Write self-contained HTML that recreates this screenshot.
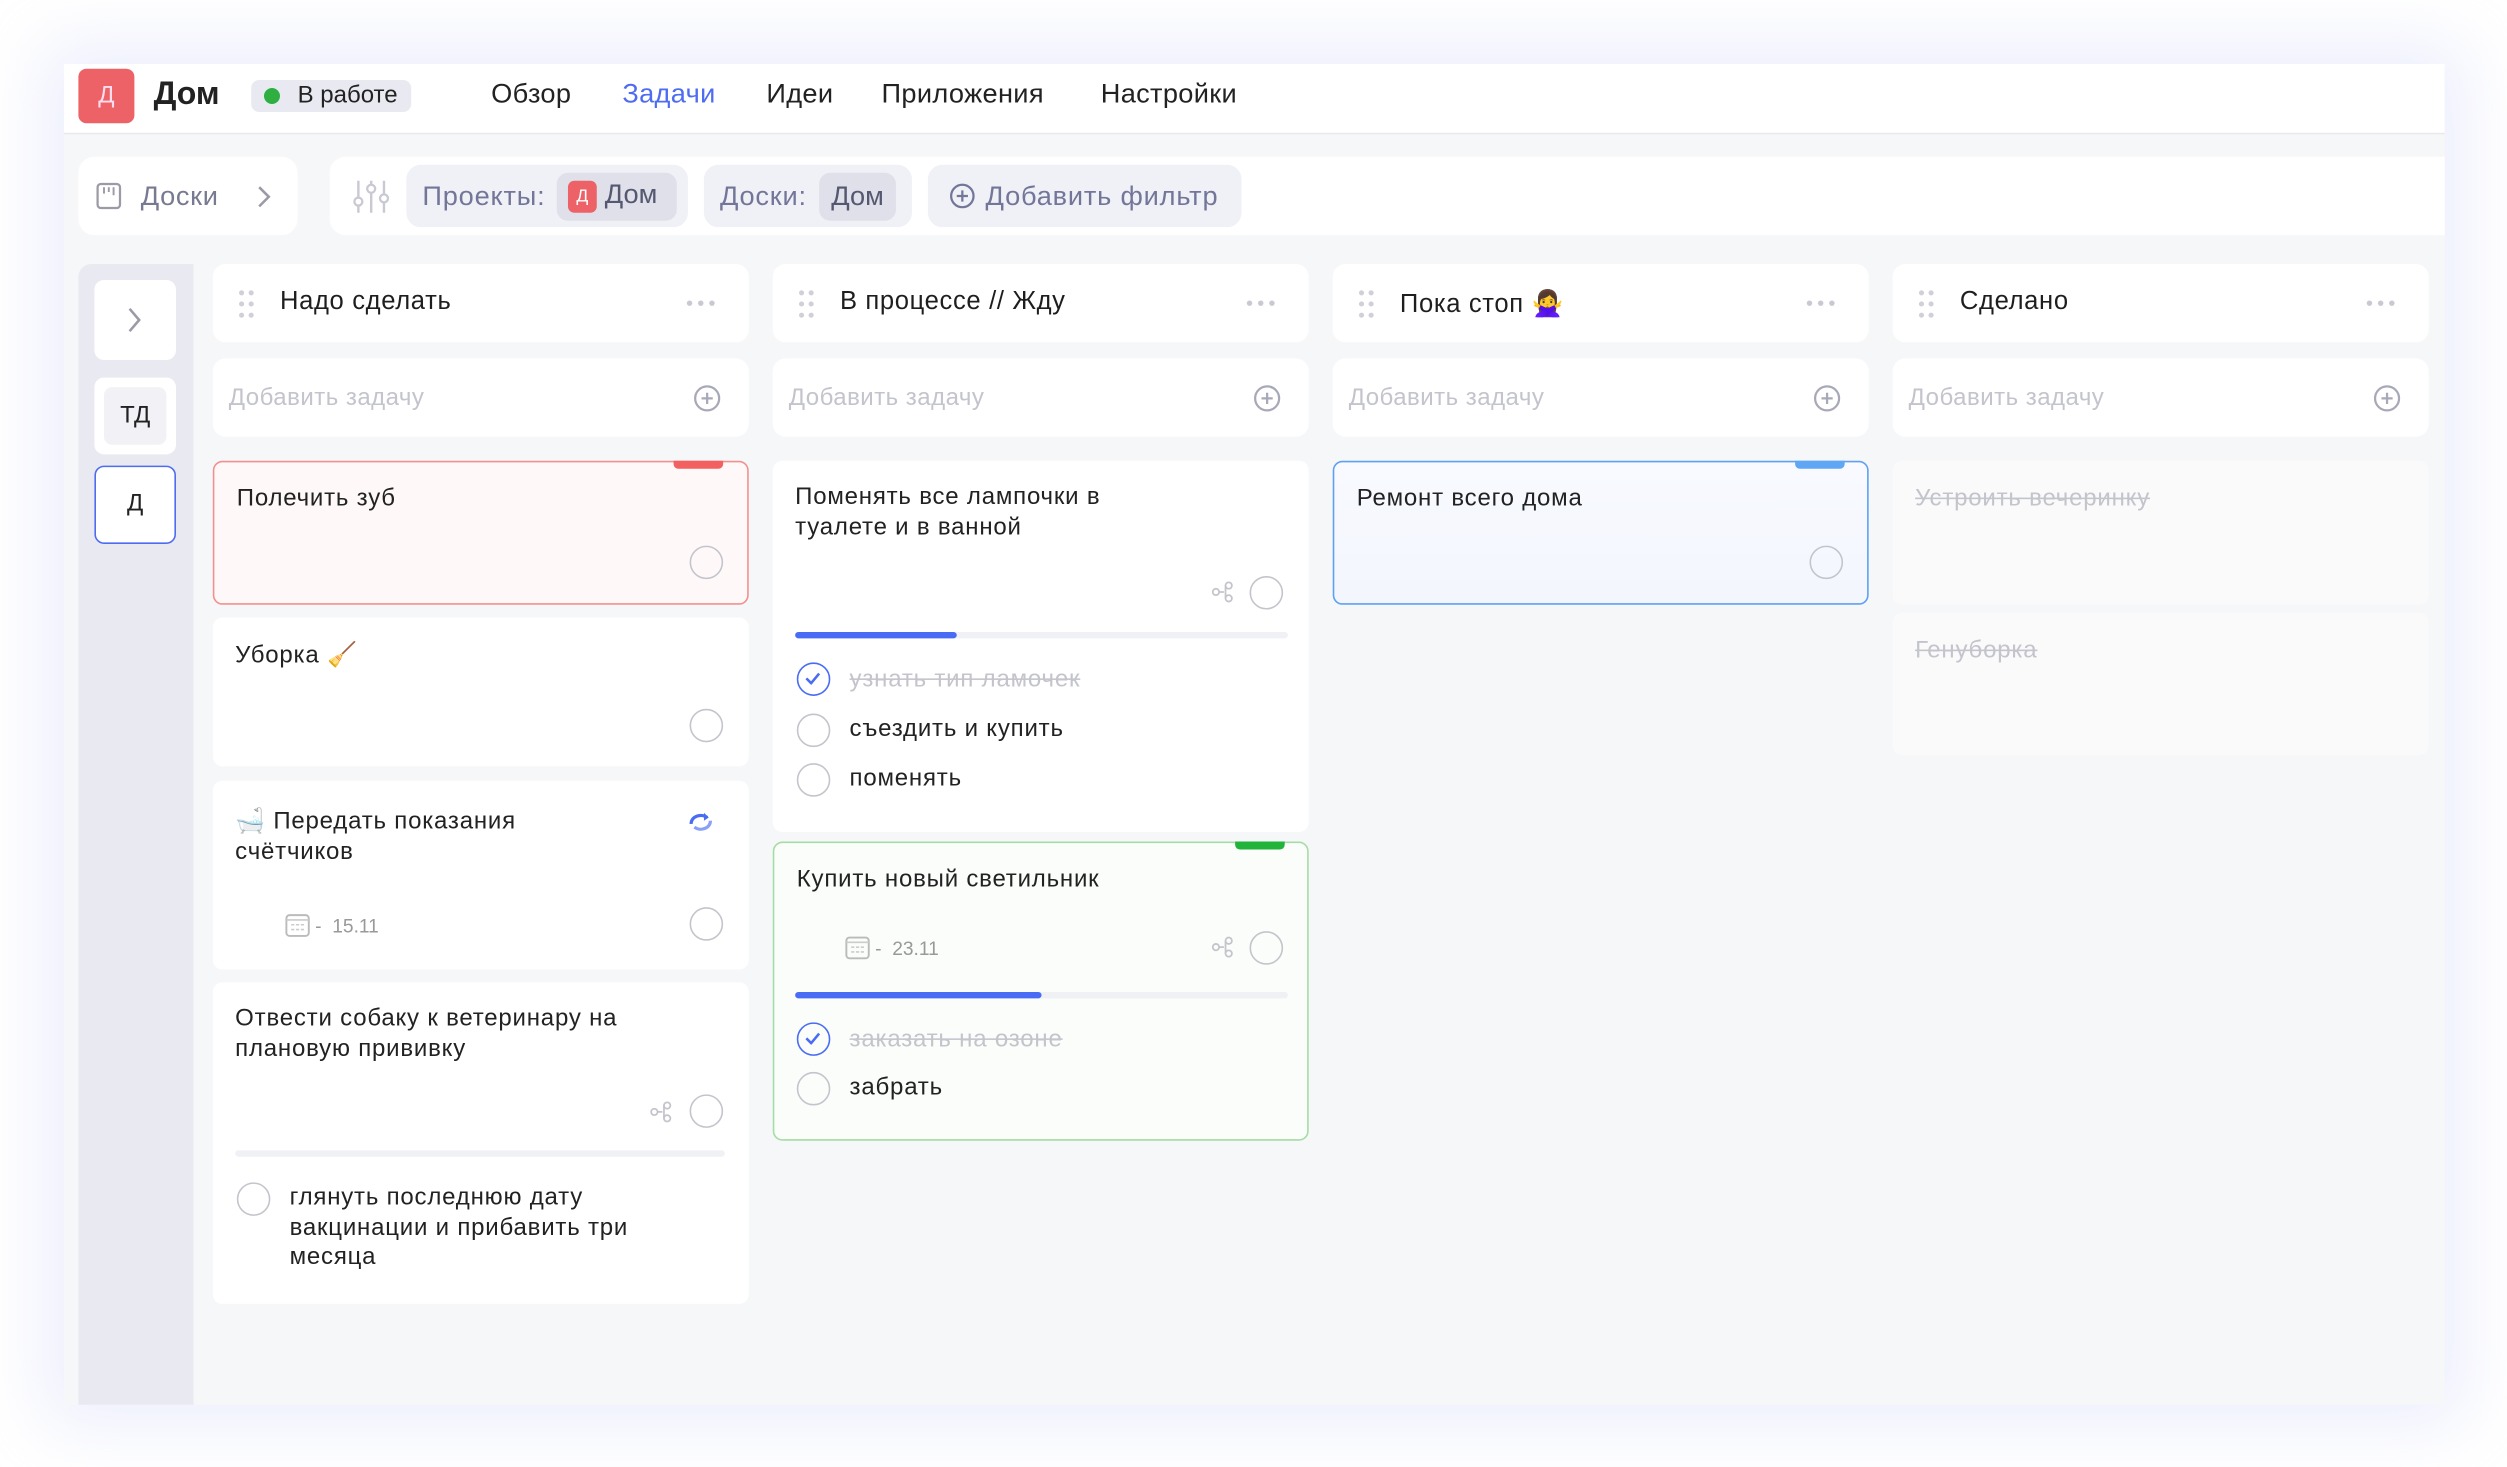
<!DOCTYPE html>
<html><head><meta charset="utf-8"><style>
*{box-sizing:border-box;margin:0;padding:0}
html,body{width:2507px;height:1467px;overflow:hidden;background:#fff}
#s{position:absolute;left:0;top:0;width:1567px;height:917px;transform:scale(1.5999);transform-origin:0 0;font-family:"Liberation Sans","DejaVu Sans",sans-serif;color:#222}
.a{position:absolute}
.frame{left:40px;top:40px;width:1488px;height:838px;background:#f6f7f9;box-shadow:0 0 40px 12px rgba(200,206,245,.35);overflow:hidden}
.hdr{left:0;top:0;width:1488px;height:44px;background:#fff;border-bottom:1px solid #e8e9ee}
.nav{top:9px;font-size:17px;color:#222;letter-spacing:.2px}
.chip{background:#f0f1f6;border-radius:9px;color:#737699;font-size:17px;height:39px;top:63px;line-height:39px;letter-spacing:.5px}
.col{width:335px}
.ch{height:49px;background:#fff;border-radius:8px}
.ch .t{left:42px;top:15px;font-size:16px;color:#1e1e1e;letter-spacing:.4px}
.add{height:49px;background:#fff;border-radius:8px}
.add .t{left:10px;top:16px;font-size:15px;color:#c3c4cc;letter-spacing:.3px}
.card{background:#fff;border-radius:6px;width:335px}
.tt{left:14px;font-size:15px;line-height:19px;color:#222;letter-spacing:.5px}
.circ{width:21px;height:21px;border:1.6px solid #c4c5cc;border-radius:50%}
.chk{width:21px;height:21px;border:1.6px solid #4a6cf4;border-radius:50%}
.st{font-size:15px;color:#222;letter-spacing:.5px}
.done{color:#c4c5cc;text-decoration:line-through}
.bar{height:4px;background:#f0f1f4;border-radius:2px}
.fill{height:4px;background:#4a6cf4;border-radius:2px;left:0;top:0}
.date{font-size:12px;color:#999}
</style></head><body><div id="s">
<div class="a frame">
 <div class="a hdr">
  <div class="a" style="left:9px;top:3px;width:35px;height:34px;background:#ec6266;border-radius:5px;color:#fde;font-size:15px;text-align:center;line-height:34px">Д</div>
  <div class="a" style="left:56px;top:8px;font-size:20px;font-weight:bold">Дом</div>
  <div class="a" style="left:117px;top:10px;width:100px;height:20px;background:#e9e9f1;border-radius:5px;font-size:15px;line-height:20px;padding-left:29px">В работе</div>
  <div class="a" style="left:125px;top:15px;width:10px;height:10px;background:#2fae42;border-radius:50%"></div>
  <div class="a nav" style="left:267px">Обзор</div>
  <div class="a nav" style="left:349px;color:#4f6cf0">Задачи</div>
  <div class="a nav" style="left:439px">Идеи</div>
  <div class="a nav" style="left:511px">Приложения</div>
  <div class="a nav" style="left:648px">Настройки</div>
 </div>
 <div class="a" style="left:9px;top:58px;width:137px;height:49px;background:#fff;border-radius:10px"></div>
 <svg class="a" style="left:20px;top:74px" width="16" height="17"><rect x="1" y="1" width="14" height="15" rx="2" fill="none" stroke="#9a9ba6" stroke-width="1.4"/><path d="M5 3v4M8 3v3M11 3v5" stroke="#9a9ba6" stroke-width="1.2"/></svg>
 <div class="a" style="left:48px;top:73px;font-size:17px;color:#777a90;letter-spacing:.4px">Доски</div>
 <svg class="a" style="left:120px;top:75px" width="10" height="16"><path d="M2 2l6 6-6 6" fill="none" stroke="#9a9ba6" stroke-width="1.6"/></svg>
 <div class="a" style="left:166px;top:58px;width:1330px;height:49px;background:#fff;border-radius:10px 0 0 10px"></div>
 <svg class="a" style="left:180px;top:71px" width="24" height="24"><path d="M4 2v20M12 2v20M20 2v20" stroke="#c8c9d2" stroke-width="1.5"/><circle cx="4" cy="15" r="2.5" fill="#fff" stroke="#c8c9d2" stroke-width="1.4"/><circle cx="12" cy="7" r="2.5" fill="#fff" stroke="#c8c9d2" stroke-width="1.4"/><circle cx="20" cy="13" r="2.5" fill="#fff" stroke="#c8c9d2" stroke-width="1.4"/></svg>
 <div class="a chip" style="left:214px;width:176px;padding-left:10px">Проекты:</div>
 <div class="a" style="left:308px;top:68px;width:75px;height:30px;background:#dfe0ea;border-radius:7px"></div>
 <div class="a" style="left:315px;top:73px;width:18px;height:20px;background:#ec6266;border-radius:4px;color:#fff;font-size:11px;text-align:center;line-height:20px">Д</div>
 <div class="a" style="left:338px;top:72px;font-size:17px;color:#555870">Дом</div>
 <div class="a chip" style="left:400px;width:130px;padding-left:10px">Доски:</div>
 <div class="a" style="left:472px;top:68px;width:48px;height:30px;background:#dfe0ea;border-radius:7px;font-size:17px;color:#555870;line-height:30px;text-align:center">Дом</div>
 <div class="a chip" style="left:540px;width:196px;padding-left:36px">Добавить фильтр</div>
 <svg class="a" style="left:553px;top:74px" width="17" height="17"><circle cx="8.5" cy="8.5" r="7" fill="none" stroke="#737699" stroke-width="1.4"/><path d="M8.5 5v7M5 8.5h7" stroke="#737699" stroke-width="1.4"/></svg>

 <div class="a" style="left:9px;top:125px;width:72px;height:720px;background:#e9eaf1;border-radius:8px 0 0 0"></div>
 <div class="a" style="left:19px;top:135px;width:51px;height:50px;background:#fff;border-radius:6px"></div>
 <svg class="a" style="left:39px;top:151px" width="10" height="18"><path d="M2 2l6 7-6 7" fill="none" stroke="#9a9ba6" stroke-width="1.6"/></svg>
 <div class="a" style="left:19px;top:196px;width:51px;height:48px;background:#fff;border-radius:6px"></div>
 <div class="a" style="left:25px;top:202px;width:39px;height:36px;background:#f2f2f6;border-radius:5px;font-size:15px;text-align:center;line-height:36px">ТД</div>
 <div class="a" style="left:19px;top:251px;width:51px;height:49px;background:#fff;border-radius:6px;border:1.5px solid #4f6cf0;font-size:15px;text-align:center;line-height:46px">Д</div>

 <div class="a col" style="left:93px;top:125px">
  <div class="a ch col"><svg class="a" style="left:16px;top:16px" width="10" height="18" fill="#cfd0d8"><circle cx="2" cy="2" r="1.6"/><circle cx="8" cy="2" r="1.6"/><circle cx="2" cy="9" r="1.6"/><circle cx="8" cy="9" r="1.6"/><circle cx="2" cy="16" r="1.6"/><circle cx="8" cy="16" r="1.6"/></svg><div class="a t">Надо сделать</div><svg class="a" style="left:295px;top:22px" width="20" height="5" fill="#c8c9d2"><circle cx="3" cy="2.5" r="1.7"/><circle cx="10" cy="2.5" r="1.7"/><circle cx="17" cy="2.5" r="1.7"/></svg></div>
  <div class="a add col" style="top:59px"><div class="a t">Добавить задачу</div><svg class="a" style="left:300px;top:16px" width="18" height="18"><circle cx="9" cy="9" r="7.5" fill="none" stroke="#a8a9b8" stroke-width="1.4"/><path d="M9 5.5v7M5.5 9h7" stroke="#a8a9b8" stroke-width="1.4"/></svg></div>
 </div>
 <div class="a col" style="left:443px;top:125px">
  <div class="a ch col"><svg class="a" style="left:16px;top:16px" width="10" height="18" fill="#cfd0d8"><circle cx="2" cy="2" r="1.6"/><circle cx="8" cy="2" r="1.6"/><circle cx="2" cy="9" r="1.6"/><circle cx="8" cy="9" r="1.6"/><circle cx="2" cy="16" r="1.6"/><circle cx="8" cy="16" r="1.6"/></svg><div class="a t">В процессе // Жду</div><svg class="a" style="left:295px;top:22px" width="20" height="5" fill="#c8c9d2"><circle cx="3" cy="2.5" r="1.7"/><circle cx="10" cy="2.5" r="1.7"/><circle cx="17" cy="2.5" r="1.7"/></svg></div>
  <div class="a add col" style="top:59px"><div class="a t">Добавить задачу</div><svg class="a" style="left:300px;top:16px" width="18" height="18"><circle cx="9" cy="9" r="7.5" fill="none" stroke="#a8a9b8" stroke-width="1.4"/><path d="M9 5.5v7M5.5 9h7" stroke="#a8a9b8" stroke-width="1.4"/></svg></div>
 </div>
 <div class="a col" style="left:793px;top:125px">
  <div class="a ch col"><svg class="a" style="left:16px;top:16px" width="10" height="18" fill="#cfd0d8"><circle cx="2" cy="2" r="1.6"/><circle cx="8" cy="2" r="1.6"/><circle cx="2" cy="9" r="1.6"/><circle cx="8" cy="9" r="1.6"/><circle cx="2" cy="16" r="1.6"/><circle cx="8" cy="16" r="1.6"/></svg><div class="a t">Пока стоп 🙅‍♀️</div><svg class="a" style="left:295px;top:22px" width="20" height="5" fill="#c8c9d2"><circle cx="3" cy="2.5" r="1.7"/><circle cx="10" cy="2.5" r="1.7"/><circle cx="17" cy="2.5" r="1.7"/></svg></div>
  <div class="a add col" style="top:59px"><div class="a t">Добавить задачу</div><svg class="a" style="left:300px;top:16px" width="18" height="18"><circle cx="9" cy="9" r="7.5" fill="none" stroke="#a8a9b8" stroke-width="1.4"/><path d="M9 5.5v7M5.5 9h7" stroke="#a8a9b8" stroke-width="1.4"/></svg></div>
 </div>
 <div class="a col" style="left:1143px;top:125px">
  <div class="a ch col"><svg class="a" style="left:16px;top:16px" width="10" height="18" fill="#cfd0d8"><circle cx="2" cy="2" r="1.6"/><circle cx="8" cy="2" r="1.6"/><circle cx="2" cy="9" r="1.6"/><circle cx="8" cy="9" r="1.6"/><circle cx="2" cy="16" r="1.6"/><circle cx="8" cy="16" r="1.6"/></svg><div class="a t">Сделано</div><svg class="a" style="left:295px;top:22px" width="20" height="5" fill="#c8c9d2"><circle cx="3" cy="2.5" r="1.7"/><circle cx="10" cy="2.5" r="1.7"/><circle cx="17" cy="2.5" r="1.7"/></svg></div>
  <div class="a add col" style="top:59px"><div class="a t">Добавить задачу</div><svg class="a" style="left:300px;top:16px" width="18" height="18"><circle cx="9" cy="9" r="7.5" fill="none" stroke="#a8a9b8" stroke-width="1.4"/><path d="M9 5.5v7M5.5 9h7" stroke="#a8a9b8" stroke-width="1.4"/></svg></div>
 </div>

 <div class="a card" style="left:93px;top:248px;height:90px;background:#fff8f8;border:1.3px solid #f29090">
  <div class="a" style="left:287px;top:-1px;width:31px;height:5px;background:#f26060;border-radius:0 0 3px 3px"></div>
  <div class="a tt" style="top:13px">Полечить зуб</div>
  <div class="a circ" style="left:297px;top:52px"></div>
 </div>
 <div class="a card" style="left:93px;top:346px;height:93px">
  <div class="a tt" style="top:14px">Уборка 🧹</div>
  <div class="a circ" style="left:298px;top:57px"></div>
 </div>
 <div class="a card" style="left:93px;top:448px;height:118px">
  <div class="a tt" style="top:16px">🛁 Передать показания<br>счётчиков</div>
  <svg class="a" style="left:296px;top:18px" width="18" height="16"><path d="M3 9a6 5 0 0 1 10-4" fill="none" stroke="#4a6cf4" stroke-width="2"/><path d="M15 7a6 5 0 0 1-10 4" fill="none" stroke="#8aa0f8" stroke-width="2"/><path d="M11 2l3 3-3 2z" fill="#4a6cf4"/></svg>
  <svg class="a" style="left:45px;top:82px" width="16" height="16"><rect x="1" y="2" width="14" height="13" rx="2" fill="none" stroke="#bbb" stroke-width="1.2"/><path d="M1 5h14M4 8h2M7 8h2M10 8h2M4 11h2M7 11h2M10 11h2" stroke="#ccc" stroke-width="1"/></svg>
  <div class="a date" style="left:64px;top:84px">-&nbsp; 15.11</div>
  <div class="a circ" style="left:298px;top:79px"></div>
 </div>
 <div class="a card" style="left:93px;top:574px;height:201px">
  <div class="a tt" style="top:13px">Отвести собаку к ветеринару на<br>плановую прививку</div>
  <svg class="a" style="left:273px;top:74px" width="14" height="14" fill="none" stroke="#c4c5cc" stroke-width="1.1"><circle cx="3" cy="7" r="2"/><circle cx="11" cy="3" r="2"/><circle cx="11" cy="11" r="2"/><path d="M5 7h3M9 3v8"/></svg>
  <div class="a circ" style="left:298px;top:70px"></div>
  <div class="a bar" style="left:14px;top:105px;width:306px"></div>
  <div class="a circ" style="left:15px;top:125px"></div>
  <div class="a st" style="left:48px;top:126px;line-height:18.5px">глянуть последнюю дату<br>вакцинации и прибавить три<br>месяца</div>
 </div>

 <div class="a card" style="left:443px;top:248px;height:232px">
  <div class="a tt" style="top:13px">Поменять все лампочки в<br>туалете и в ванной</div>
  <svg class="a" style="left:274px;top:75px" width="14" height="14" fill="none" stroke="#c4c5cc" stroke-width="1.1"><circle cx="3" cy="7" r="2"/><circle cx="11" cy="3" r="2"/><circle cx="11" cy="11" r="2"/><path d="M5 7h3M9 3v8"/></svg>
  <div class="a circ" style="left:298px;top:72px"></div>
  <div class="a bar" style="left:14px;top:107px;width:308px"><div class="a fill" style="width:101px"></div></div>
  <div class="a chk" style="left:15px;top:126px"><svg class="a" style="left:4px;top:5px" width="10" height="8"><path d="M1 4l3 3 5-6" fill="none" stroke="#4a6cf4" stroke-width="1.6"/></svg></div>
  <div class="a st done" style="left:48px;top:128px">узнать тип ламочек</div>
  <div class="a circ" style="left:15px;top:158px"></div>
  <div class="a st" style="left:48px;top:159px">съездить и купить</div>
  <div class="a circ" style="left:15px;top:189px"></div>
  <div class="a st" style="left:48px;top:190px">поменять</div>
 </div>
 <div class="a card" style="left:443px;top:486px;height:187px;background:#fafdfa;border:1.3px solid #a6dca6">
  <div class="a" style="left:288px;top:-1px;width:31px;height:5px;background:#22b43a;border-radius:0 0 3px 3px"></div>
  <div class="a tt" style="top:13px">Купить новый светильник</div>
  <svg class="a" style="left:44px;top:57px" width="16" height="16"><rect x="1" y="2" width="14" height="13" rx="2" fill="none" stroke="#bbb" stroke-width="1.2"/><path d="M1 5h14M4 8h2M7 8h2M10 8h2M4 11h2M7 11h2M10 11h2" stroke="#ccc" stroke-width="1"/></svg>
  <div class="a date" style="left:63px;top:59px">-&nbsp; 23.11</div>
  <svg class="a" style="left:273px;top:58px" width="14" height="14" fill="none" stroke="#c4c5cc" stroke-width="1.1"><circle cx="3" cy="7" r="2"/><circle cx="11" cy="3" r="2"/><circle cx="11" cy="11" r="2"/><path d="M5 7h3M9 3v8"/></svg>
  <div class="a circ" style="left:297px;top:55px"></div>
  <div class="a bar" style="left:13px;top:93px;width:308px"><div class="a fill" style="width:154px"></div></div>
  <div class="a chk" style="left:14px;top:112px"><svg class="a" style="left:4px;top:5px" width="10" height="8"><path d="M1 4l3 3 5-6" fill="none" stroke="#4a6cf4" stroke-width="1.6"/></svg></div>
  <div class="a st done" style="left:47px;top:114px">заказать на озоне</div>
  <div class="a circ" style="left:14px;top:143px"></div>
  <div class="a st" style="left:47px;top:144px">забрать</div>
 </div>

 <div class="a card" style="left:793px;top:248px;height:90px;background:linear-gradient(#f8faff,#f3f6fd);border:1.3px solid #5fa0f2">
  <div class="a" style="left:288px;top:-1px;width:31px;height:5px;background:#5fa6f4;border-radius:0 0 3px 3px"></div>
  <div class="a tt" style="top:13px">Ремонт всего дома</div>
  <div class="a circ" style="left:297px;top:52px"></div>
 </div>
 <div class="a card" style="left:1143px;top:248px;height:90px;background:#fafafb">
  <div class="a tt done" style="top:14px">Устроить вечеринку</div>
 </div>
 <div class="a card" style="left:1143px;top:343px;height:89px;background:#fafafb">
  <div class="a tt done" style="top:14px">Генуборка</div>
 </div>
</div>
</div></body></html>
